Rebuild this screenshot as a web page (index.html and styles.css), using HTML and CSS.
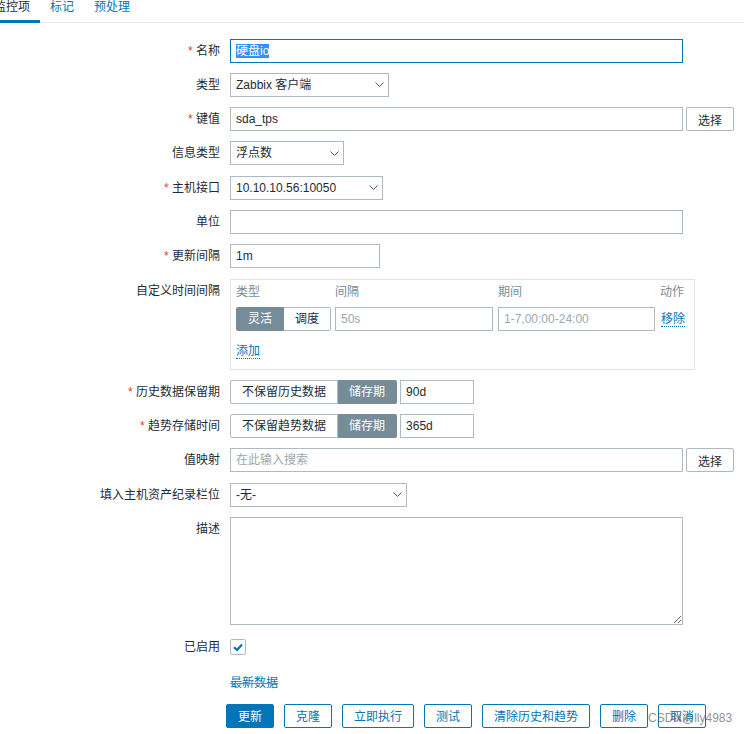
FILE: index.html
```html
<!DOCTYPE html>
<html lang="zh-CN">
<head>
<meta charset="utf-8">
<title>监控项</title>
<link rel="stylesheet" href="styles.css">
</head>
<body>
<div class="tabs">
  <span class="tab active">监控项</span>
  <span class="tab">标记</span>
  <span class="tab">预处理</span>
</div>

<div class="form">
  <div class="lbl req">名称</div>
  <div class="field"><div class="input focus w-full"><span class="selected">硬盘io</span></div></div>

  <div class="lbl">类型</div>
  <div class="field"><div class="select w-type"><span>Zabbix 客户端</span><svg class="chev" width="9" height="5" viewBox="0 0 9 5"><path d="M0.5 0.5 L4.5 4.5 L8.5 0.5" fill="none" stroke="#555" stroke-width="1"/></svg></div></div>

  <div class="lbl req">键值</div>
  <div class="field"><div class="input w-full">sda_tps</div><button class="btn-grey">选择</button></div>

  <div class="lbl">信息类型</div>
  <div class="field"><div class="select w-info"><span>浮点数</span><svg class="chev" width="9" height="5" viewBox="0 0 9 5"><path d="M0.5 0.5 L4.5 4.5 L8.5 0.5" fill="none" stroke="#555" stroke-width="1"/></svg></div></div>

  <div class="lbl req">主机接口</div>
  <div class="field"><div class="select w-iface"><span>10.10.10.56:10050</span><svg class="chev" width="9" height="5" viewBox="0 0 9 5"><path d="M0.5 0.5 L4.5 4.5 L8.5 0.5" fill="none" stroke="#555" stroke-width="1"/></svg></div></div>

  <div class="lbl">单位</div>
  <div class="field"><div class="input w-full"></div></div>

  <div class="lbl req">更新间隔</div>
  <div class="field"><div class="input w-upd">1m</div></div>

  <div class="lbl">自定义时间间隔</div>
  <div class="field">
    <div class="intervals">
      <div class="iv-grid">
        <div class="th">类型</div>
        <div class="th">间隔</div>
        <div class="th">期间</div>
        <div class="th">动作</div>
        <div class="toggle">
          <span class="seg on">灵活</span><span class="seg">调度</span>
        </div>
        <div class="input ph">50s</div>
        <div class="input ph">1-7,00:00-24:00</div>
        <div class="act"><span class="link">移除</span></div>
      </div>
      <div class="add"><span class="link">添加</span></div>
    </div>
  </div>

  <div class="lbl req">历史数据保留期</div>
  <div class="field"><div class="toggle"><span class="seg">不保留历史数据</span><span class="seg on">储存期</span></div><div class="input w-days">90d</div></div>

  <div class="lbl req">趋势存储时间</div>
  <div class="field"><div class="toggle"><span class="seg">不保留趋势数据</span><span class="seg on">储存期</span></div><div class="input w-days">365d</div></div>

  <div class="lbl">值映射</div>
  <div class="field"><div class="input ph w-full">在此输入搜索</div><button class="btn-grey">选择</button></div>

  <div class="lbl">填入主机资产纪录栏位</div>
  <div class="field"><div class="select w-inv"><span>-无-</span><svg class="chev" width="9" height="5" viewBox="0 0 9 5"><path d="M0.5 0.5 L4.5 4.5 L8.5 0.5" fill="none" stroke="#555" stroke-width="1"/></svg></div></div>

  <div class="lbl">描述</div>
  <div class="field"><textarea class="desc"></textarea></div>

  <div class="lbl">已启用</div>
  <div class="field"><div class="checkbox"><svg width="16" height="16" viewBox="0 0 16 16"><path d="M4 8.2 L7 11 L12 5.5" fill="none" stroke="#0275b8" stroke-width="2.2"/></svg></div></div>

  <div class="lbl"></div>
  <div class="field"><span class="latest">最新数据</span></div>

  <div class="lbl"></div>
  <div class="field buttons">
    <button class="btn primary">更新</button>
    <button class="btn">克隆</button>
    <button class="btn">立即执行</button>
    <button class="btn">测试</button>
    <button class="btn">清除历史和趋势</button>
    <button class="btn">删除</button>
    <button class="btn">取消</button>
  </div>
</div>

<div class="watermark">CSDN@lly4983</div>
</body>
</html>
```

FILE: styles.css
```css
html, body {
  margin: 0;
  padding: 0;
  background: #ffffff;
}
body {
  font-family: "Liberation Sans", Arial, "Noto Sans CJK SC", sans-serif;
  font-size: 12px;
  color: #1f2c33;
  width: 744px;
  height: 734px;
  overflow: hidden;
  position: relative;
}

/* Tabs */
.tabs {
  display: flex;
  margin-left: -16px;
  border-bottom: 1px solid #e6eaec;
  height: 22px;
}
.tab {
  padding: 0 10px;
  line-height: 14px;
  height: 20px;
  color: #0275b8;
  border-bottom: 3px solid transparent;
}
.tab.active {
  color: #1f2c33;
  border-bottom-color: #0275b8;
}

/* Form grid */
.form {
  display: grid;
  grid-template-columns: 220px 1fr;
  column-gap: 10px;
  row-gap: 10.3px;
  padding-top: 15.5px;
}
.lbl {
  text-align: right;
  line-height: 24px;
  white-space: nowrap;
}
.lbl.req::before {
  content: "* ";
  color: #e33734;
}
.field {
  display: flex;
  align-items: center;
  gap: 3px;
  min-height: 24px;
}

/* Inputs */
.input {
  box-sizing: border-box;
  height: 24px;
  border: 1px solid #acbbc2;
  background: #fff;
  padding: 0 5px;
  line-height: 22px;
  white-space: nowrap;
  overflow: hidden;
}
.input.focus {
  border-color: #0275b8;
}
.input.ph {
  color: #9aa8af;
}
.selected {
  background: #3390ff;
  color: #fff;
}
.w-full { width: 453px; }
.w-upd { width: 150px; }
.w-days { width: 74px; }

.select {
  box-sizing: border-box;
  height: 24px;
  border: 1px solid #acbbc2;
  background: #fff;
  padding: 0 5px;
  line-height: 22px;
  display: flex;
  align-items: center;
  justify-content: space-between;
}
.chev { flex: none; margin-right: -1px; }
.w-type { width: 159px; }
.w-info { width: 114px; }
.w-iface { width: 153px; }
.w-inv { width: 177px; }

.btn-grey {
  box-sizing: border-box;
  height: 24px;
  width: 48px;
  border: 1px solid #acbbc2;
  border-radius: 2px;
  background: #fff;
  color: #1f2c33;
  font: inherit;
  padding: 0;
}

/* Custom intervals */
.intervals {
  box-sizing: border-box;
  width: 465px;
  height: 91px;
  border: 1px solid #dfe4e7;
  padding: 4px 5px 0;
}
.iv-grid {
  display: grid;
  grid-template-columns: 94px 158px 157px auto;
  column-gap: 5px;
  row-gap: 7px;
}
.th {
  color: #768d99;
  line-height: 16px;
}
.iv-grid .th:last-child { padding-left: 1px; }
.act {
  line-height: 24px;
  padding-left: 1px;
}
.link {
  color: #0275b8;
  border-bottom: 1px dotted #0275b8;
}
.add {
  margin-top: 12px;
  line-height: 16px;
}

/* Toggle (radio segmented) */
.toggle {
  display: flex;
  height: 24px;
}
.seg {
  box-sizing: border-box;
  height: 24px;
  line-height: 22px;
  padding: 0 11px;
  border: 1px solid #acbbc2;
  background: #fff;
  white-space: nowrap;
}
.seg:first-child { border-radius: 2px 0 0 2px; }
.seg:last-child { border-radius: 0 2px 2px 0; border-left: none; }
.seg.on {
  background: #768d99;
  border-color: #768d99;
  color: #fff;
}

/* Description */
.desc {
  box-sizing: border-box;
  width: 453px;
  height: 108px;
  border: 1px solid #acbbc2;
  margin: 0;
  padding: 4px 5px;
  font: inherit;
  display: block;
}

/* Checkbox */
.checkbox {
  box-sizing: border-box;
  width: 16px;
  height: 16px;
  border: 1px solid #acbbc2;
  border-radius: 2px;
  display: flex;
  align-items: center;
  justify-content: center;
  overflow: hidden;
}
.checkbox svg { flex: none; }

.latest {
  color: #0275b8;
  text-decoration: line-through;
  text-decoration-color: #4d9bd0;
  text-decoration-thickness: 1px;
}

/* Buttons */
.buttons {
  gap: 10px;
  margin-left: -4px;
}
.btn {
  box-sizing: border-box;
  height: 24px;
  padding: 0 11px;
  border: 1px solid #0275b8;
  border-radius: 2px;
  background: #fff;
  color: #0275b8;
  font: inherit;
  white-space: nowrap;
}
.btn.primary {
  background: #0275b8;
  color: #fff;
}

.watermark {
  position: absolute;
  left: 648px;
  top: 711px;
  font-size: 12px;
  color: rgba(110, 110, 110, 0.75);
  font-family: "Liberation Sans", Arial, sans-serif;
  white-space: nowrap;
}
```
